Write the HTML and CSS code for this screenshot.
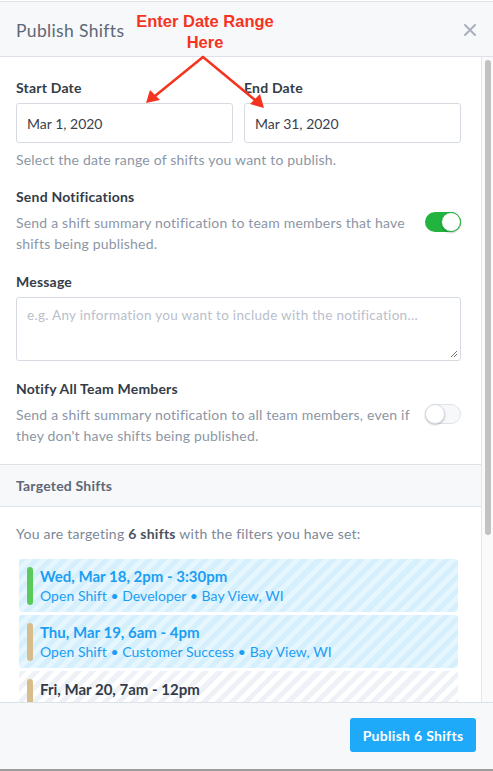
FILE: index.html
```html
<!DOCTYPE html>
<html>
<head>
<meta charset="utf-8">
<link rel="stylesheet" href="styles.css">
</head>
<body>
<div class="modal">
  <div class="header">
    <div class="title">Publish Shifts</div>
    <svg class="close" width="12" height="12" viewBox="0 0 12 12"><path d="M1 1L11 11M11 1L1 11" stroke="#a9b1bc" stroke-width="2" stroke-linecap="round"/></svg>
  </div>
  <div class="main">
    <div class="content">
      <div class="row">
        <div class="field">
          <div class="label">Start Date</div>
          <div class="input">Mar 1, 2020</div>
        </div>
        <div class="field">
          <div class="label">End Date</div>
          <div class="input">Mar 31, 2020</div>
        </div>
      </div>
      <div class="help">Select the date range of shifts you want to publish.</div>

      <div class="label mt">Send Notifications</div>
      <div class="toggle-row">
        <div class="desc">Send a shift summary notification to team members that have shifts being published.</div>
        <div class="toggle on"><span class="knob"></span></div>
      </div>

      <div class="label mt">Message</div>
      <div class="textarea"><span class="ph">e.g. Any information you want to include with the notification...</span>
        <svg class="grip" width="8" height="8" viewBox="0 0 8 8"><path d="M7 1L1 7M7 4L4 7" stroke="#777" stroke-width="1"/></svg>
      </div>

      <div class="label mt">Notify All Team Members</div>
      <div class="toggle-row">
        <div class="desc">Send a shift summary notification to all team members, even if they don't have shifts being published.</div>
        <div class="toggle off"><span class="knob"></span></div>
      </div>

      <div class="section-head">Targeted Shifts</div>
      <div class="targeting">You are targeting <b>6 shifts</b> with the filters you have set:</div>
      <div class="cards">
        <div class="card open">
          <span class="bar green"></span>
          <div class="card-text">
            <div class="card-title">Wed, Mar 18, 2pm - 3:30pm</div>
            <div class="card-sub">Open Shift • Developer • Bay View, WI</div>
          </div>
        </div>
        <div class="card open">
          <span class="bar tan"></span>
          <div class="card-text">
            <div class="card-title">Thu, Mar 19, 6am - 4pm</div>
            <div class="card-sub">Open Shift • Customer Success • Bay View, WI</div>
          </div>
        </div>
        <div class="card assigned">
          <span class="bar tan"></span>
          <div class="card-text">
            <div class="card-title">Fri, Mar 20, 7am - 12pm</div>
          </div>
        </div>
      </div>
    </div>
    <div class="scrollbar"><div class="thumb"></div></div>
  </div>
  <div class="footer">
    <button class="publish">Publish 6 Shifts</button>
  </div>
</div>
<div class="bottom-bar"></div>

<div class="annotation">
  <div class="note">Enter Date Range<br>Here</div>
  <svg class="arrows" width="493" height="120" viewBox="0 0 493 120">
    <g stroke="#f5341f" stroke-width="2.5" fill="none" stroke-linecap="round">
      <path d="M203 57L155 96"/>
      <path d="M203 57L255 100"/>
    </g>
    <path d="M146 103L150 90L160 100Z" fill="#f5341f"/>
    <path d="M264 108L250 104L260 94Z" fill="#f5341f"/>
  </svg>
</div>
</body>
</html>
```

FILE: styles.css
```css
* { box-sizing: border-box; }
html, body { margin: 0; padding: 0; }
body {
  width: 493px;
  height: 771px;
  background: #ffffff;
  font-family: "Lato", "Open Sans", sans-serif;
  color: #333b48;
  overflow: hidden;
  position: relative;
}
.modal {
  height: 768px;
  display: flex;
  flex-direction: column;
  border-top: 1px solid #dfe2e8;
  margin-top: 1px;
}
.header {
  height: 55px;
  flex: none;
  background: #f7f8fa;
  border-bottom: 1px solid #dde1e8;
  display: flex;
  align-items: center;
  justify-content: space-between;
  padding: 3px 17px 0 16px;
}
.title {
  font-size: 17.5px;
  color: #5d6778;
  font-weight: 400;
  letter-spacing: 0.35px;
}
.close { margin-top: -2px; }
.main {
  flex: 1;
  display: flex;
  overflow: hidden;
  min-height: 0;
}
.content {
  flex: 1;
  padding: 22px 20px 0 16px;
  overflow: hidden;
}
.scrollbar {
  width: 12px;
  flex: none;
  background: #fafafa;
  border-left: 1px solid #e6e6e6;
  padding: 3px 2px 0 3px;
}
.thumb {
  width: 6px;
  height: 475px;
  background: #c2c2c2;
  border-radius: 3px;
}
.row {
  display: flex;
  gap: 11px;
}
.field { flex: 1; }
.label {
  font-size: 14px;
  font-weight: 700;
  line-height: 18px;
  letter-spacing: 0.2px;
  color: #343c48;
}
.label.mt { margin-top: 19px; }
.input {
  margin-top: 6px;
  height: 40px;
  border: 1px solid #d6dbe2;
  border-radius: 3px;
  padding: 0 10px;
  display: flex;
  align-items: center;
  font-size: 14px;
  color: #3a414d;
}
.help {
  margin-top: 8px;
  font-size: 14px;
  letter-spacing: 0.2px;
  line-height: 18px;
  color: #8c96a5;
}
.toggle-row {
  display: flex;
  align-items: flex-start;
  justify-content: space-between;
  margin-top: 6px;
}
.desc {
  width: 400px;
  font-size: 14px;
  letter-spacing: 0.2px;
  line-height: 21px;
  color: #8c96a5;
}
.toggle {
  width: 36px;
  height: 20px;
  border-radius: 10px;
  position: relative;
  flex: none;
}
.toggle.on { background: #23b33f; }
.toggle.off { background: #f7f8fa; border: 1px solid #dfe3ea; }
.knob {
  position: absolute;
  top: 0;
  width: 20px;
  height: 20px;
  border-radius: 50%;
  background: #fff;
  box-shadow: 0 1px 2px rgba(0,0,0,0.25);
}
.toggle.on .knob { right: 0; border: 1px solid #23b33f; }
.toggle.off .knob { left: -1px; top: -1px; border: 1px solid #d9dde5; }
.textarea {
  margin-top: 6px;
  height: 64px;
  border: 1px solid #d6dbe2;
  border-radius: 3px;
  padding: 8px 10px;
  position: relative;
  font-size: 13.5px;
  letter-spacing: 0.3px;
  line-height: 18px;
}
.ph { color: #b9c0cb; }
.grip { position: absolute; right: 2px; bottom: 2px; }
.section-head {
  margin: 18px -20px 0 -16px;
  height: 43px;
  background: #f7f8fa;
  border-top: 1px solid #dde1e8;
  border-bottom: 1px solid #dde1e8;
  padding-left: 16px;
  display: flex;
  align-items: center;
  font-size: 14px;
  letter-spacing: 0.2px;
  font-weight: 700;
  color: #5d6778;
}
.targeting {
  margin-top: 18px;
  font-size: 14px;
  letter-spacing: 0.25px;
  line-height: 18px;
  color: #7d8797;
}
.targeting b { color: #4a525e; }
.cards {
  margin: 16px 3px 0 3px;
  display: flex;
  flex-direction: column;
  gap: 3px;
}
.card {
  height: 53px;
  border-radius: 3px;
  display: flex;
  align-items: center;
  padding-left: 8px;
  gap: 7px;
}
.card.assigned { align-items: flex-start; padding-top: 8px; }
.card.open {
  background: repeating-linear-gradient(135deg, #d5effd 0 5px, #e5f6fe 5px 10px);
  color: #1b9ef2;
}
.card.assigned {
  background: repeating-linear-gradient(135deg, #eef2f7 0 5px, #ffffff 5px 10px);
  color: #333b48;
}
.bar {
  width: 6px;
  height: 38px;
  border-radius: 3px;
  flex: none;
}
.bar.green { background: #5acb5a; }
.bar.tan { background: #d6bd89; }
.card-title {
  font-size: 15px;
  font-weight: 700;
  line-height: 20px;
}
.card-sub {
  font-size: 14px;
  line-height: 20px;
  letter-spacing: 0.05px;
}
.footer {
  height: 67px;
  flex: none;
  background: #f7f8fa;
  border-top: 1px solid #dde1e8;
  display: flex;
  justify-content: flex-end;
  align-items: flex-start;
  padding: 15px 17px 0 0;
}
.publish {
  width: 126px;
  height: 34px;
  border: none;
  border-radius: 3px;
  background: #1eaaf8;
  color: #fff;
  font-family: "Lato", sans-serif;
  font-size: 14px;
  letter-spacing: 0.3px;
  font-weight: 700;
}
.bottom-bar {
  height: 3px;
  background: #9b9b9b;
}
.annotation {
  position: absolute;
  left: 0;
  top: 0;
  width: 493px;
  height: 120px;
  pointer-events: none;
}
.note {
  position: absolute;
  left: 100px;
  width: 210px;
  top: 11px;
  text-align: center;
  font-family: "Liberation Sans", Arial, sans-serif;
  font-size: 16.5px;
  font-weight: 700;
  line-height: 21px;
  color: #f5341f;
}
.arrows { position: absolute; left: 0; top: 0; }
```
